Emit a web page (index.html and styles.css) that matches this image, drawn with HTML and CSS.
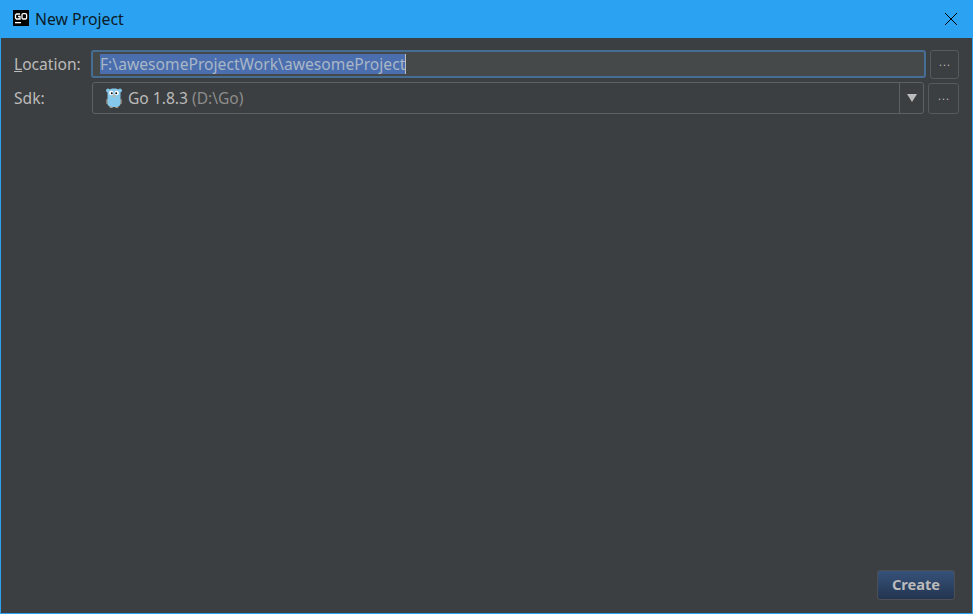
FILE: index.html
```html
<!DOCTYPE html>
<html lang="en">
<head>
  <meta charset="UTF-8">
  <title>New Project</title>
  <link rel="stylesheet" href="styles.css">
</head>
<body>

  <div class="window">
    <div class="titlebar">
      <svg class="app-icon" width="16" height="16" viewBox="0 0 16 16">
        <rect width="16" height="16" fill="#000"/>
        <path d="M7 4H3.500L2.500 5v3l1 1H7V6.500H5" fill="none" stroke="#fff" stroke-width="1.300"/>
        <rect x="9" y="3.600" width="4.600" height="5.400" rx="1.200" fill="none" stroke="#fff" stroke-width="1.300"/>
        <rect x="2" y="12" width="6" height="1.300" fill="#fff"/>
      </svg>
      <span class="title">New Project</span>
      <svg class="close" width="14" height="14" viewBox="0 0 14 14">
        <path d="M1 1L13 13M13 1L1 13" stroke="#000" stroke-width="1" fill="none"/>
      </svg>
    </div>

    <div class="content">
      <div class="row row-location">
        <label class="label"><u>L</u>ocation:</label>
        <div class="input">
          <span class="selection">F:\awesomeProjectWork\awesomeProject</span><span class="caret"></span>
        </div>
        <button class="browse">...</button>
      </div>

      <div class="row row-sdk">
        <label class="label">Sdk:</label>
        <div class="combo">
          <div class="combo-value">
            <svg class="gopher" width="18" height="22" viewBox="0 0 18 22">
              <ellipse cx="3" cy="3.500" rx="2" ry="2" fill="#7fc4e4"/>
              <ellipse cx="15" cy="3.500" rx="2" ry="2" fill="#7fc4e4"/>
              <rect x="1" y="12" width="2.500" height="5" rx="1" fill="#8a7f72"/>
              <rect x="14.500" y="12" width="2.500" height="5" rx="1" fill="#8a7f72"/>
              <rect x="4.500" y="19" width="3.500" height="2" rx="1" fill="#a89a85"/>
              <rect x="10" y="19" width="3.500" height="2" rx="1" fill="#a89a85"/>
              <path d="M2.500 6C2.500 3 5 1.500 9 1.500S15.500 3 15.500 6V16.500c0 2.800-2.500 3.500-6.500 3.500S2.500 19.300 2.500 16.500z" fill="#85c8ea"/>
              <circle cx="6.300" cy="6" r="2.200" fill="#fff"/>
              <circle cx="11.700" cy="6" r="2.200" fill="#fff"/>
              <circle cx="6.800" cy="6.300" r="1" fill="#111"/>
              <circle cx="11.200" cy="6.300" r="1" fill="#111"/>
              <ellipse cx="9" cy="9" rx="1.300" ry="0.900" fill="#c9b79c"/>
            </svg>
            <span>Go 1.8.3</span>
            <span class="sdk-path">(D:\Go)</span>
          </div>
          <div class="combo-arrow"><span class="triangle"></span></div>
        </div>
        <button class="browse">...</button>
      </div>

      <div class="spacer"></div>

      <div class="footer">
        <button class="create">Create</button>
      </div>
    </div>
  </div>

</body>
</html>
```

FILE: styles.css
```css
* {
  box-sizing: border-box;
}

html, body {
  height: 100%;
}

body {
  margin: 0;
  font-family: 'Noto Sans', 'Open Sans', sans-serif;
  font-size: 15.6px;
  color: #bbb;
  background-color: #3c3f41;
}

.window {
  display: flex;
  flex-direction: column;
  height: 614px;
  border: 1px solid #2ba3f2;
  border-top: none;
}

.titlebar {
  display: flex;
  align-items: center;
  height: 38px;
  flex: none;
  padding: 0 14px 0 12px;
  background-color: #2ba3f2;
  color: #0b1a26;
}

.app-icon {
  margin-right: 6px;
  margin-top: -2px;
}

.title {
  flex: 1;
  font-size: 15.800px;
}

.content {
  display: flex;
  flex-direction: column;
  flex: 1;
  padding: 11px 13px 13px 13px;
}

.row {
  display: flex;
  align-items: center;
}

.row-location {
  height: 30px;
  margin-bottom: 3px;
}

.row-sdk {
  height: 32px;
}

.label {
  width: 77px;
  flex: none;
}

.input {
  display: flex;
  align-items: center;
  width: 835px;
  height: 28px;
  padding-left: 7px;
  background-color: #45494a;
  border: 2px solid #466d94;
  border-radius: 3px;
  margin-right: 4px;
}

.selection {
  background-color: #4b6eaf;
  color: #a9b7c6;
  line-height: 20px;
  letter-spacing: 0.03px;
}

.caret {
  width: 1px;
  height: 20px;
  background-color: #bbb;
}

.browse {
  width: 29px;
  height: 29px;
  padding: 0 0 5px 1px;
  font: 11px 'Noto Sans', sans-serif;
  letter-spacing: 1px;
  color: #bbb;
  background-color: #3c3f41;
  border: 1px solid #565a5c;
  border-radius: 3px;
}

.combo {
  display: flex;
  width: 832px;
  height: 32px;
  margin-left: 1px;
  margin-right: 4px;
  background-color: #3c3f41;
  border: 1px solid #5e6163;
  border-radius: 3px;
}

.combo-value {
  display: flex;
  align-items: center;
  flex: 1;
  gap: 5px;
  padding-left: 12px;
}

.gopher {
  flex: none;
}

.sdk-path {
  color: #8c8c8c;
  margin-left: -1px;
}

.combo-arrow {
  display: flex;
  align-items: center;
  justify-content: center;
  width: 24px;
  border-left: 1px solid #5e6163;
}

.triangle {
  width: 0;
  height: 0;
  border-left: 5px solid transparent;
  border-right: 5px solid transparent;
  border-top: 8px solid #bbb;
}

.row-sdk .browse {
  width: 31px;
  height: 31px;
}

.spacer {
  flex: 1;
}

.footer {
  display: flex;
  justify-content: flex-end;
  padding-right: 4px;
}

.create {
  width: 78px;
  height: 30px;
  padding-bottom: 3px;
  font: bold 14.600px 'Noto Sans', sans-serif;
  color: #bbb;
  background: linear-gradient(#36527a, #233550);
  border: 1px solid #4c5052;
  border-radius: 3px;
}
```
